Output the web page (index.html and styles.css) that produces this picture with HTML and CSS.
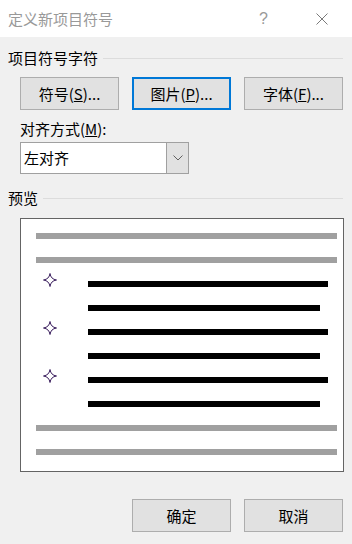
FILE: index.html
```html
<!DOCTYPE html>
<html>
<head>
    <title>定义新项目符号</title>
    <link rel="stylesheet" href="styles.css">
</head>
<body>
    <div class="dialog">
        <div class="titlebar">
            <span class="title">定义新项目符号</span>
            <span class="help">?</span>
            <svg class="close" width="12" height="12" viewBox="0 0 12 12">
                <path d="M0.5 0.5 L11.5 11.5 M11.5 0.5 L0.5 11.5" stroke="#7a7a7a" stroke-width="1" fill="none"/>
            </svg>
        </div>

        <div class="content">
            <div class="group-title">
                <span>项目符号字符</span>
                <div class="rule"></div>
            </div>

            <div class="button-row">
                <button class="btn">符号(<u>S</u>)...</button>
                <button class="btn btn-focus">图片(<u>P</u>)...</button>
                <button class="btn">字体(<u>F</u>)...</button>
            </div>

            <div class="field-label">对齐方式(<u>M</u>):</div>
            <div class="combo">
                <span class="combo-value">左对齐</span>
                <span class="combo-arrow">
                    <svg width="10" height="6" viewBox="0 0 10 6">
                        <path d="M0.5 0.5 L5 5 L9.5 0.5" stroke="#606060" stroke-width="1" fill="none"/>
                    </svg>
                </span>
            </div>

            <div class="group-title preview-title">
                <span>预览</span>
                <div class="rule"></div>
            </div>

            <div class="preview">
                <div class="bar bar-gray"></div>
                <div class="bar bar-gray"></div>

                <div class="item">
                    <svg class="star" width="14" height="14" viewBox="0 0 14 14">
                        <path d="M7 0.5 Q7.8 6.2 13.5 7 Q7.8 7.8 7 13.5 Q6.2 7.8 0.5 7 Q6.2 6.2 7 0.5 Z" fill="#fff" stroke="#3b1f5e" stroke-width="1"/>
                    </svg>
                    <div class="bar bar-long"></div>
                </div>
                <div class="item">
                    <div class="bar bar-short"></div>
                </div>

                <div class="item">
                    <svg class="star" width="14" height="14" viewBox="0 0 14 14">
                        <path d="M7 0.5 Q7.8 6.2 13.5 7 Q7.8 7.8 7 13.5 Q6.2 7.8 0.5 7 Q6.2 6.2 7 0.5 Z" fill="#fff" stroke="#3b1f5e" stroke-width="1"/>
                    </svg>
                    <div class="bar bar-long"></div>
                </div>
                <div class="item">
                    <div class="bar bar-short"></div>
                </div>

                <div class="item">
                    <svg class="star" width="14" height="14" viewBox="0 0 14 14">
                        <path d="M7 0.5 Q7.8 6.2 13.5 7 Q7.8 7.8 7 13.5 Q6.2 7.8 0.5 7 Q6.2 6.2 7 0.5 Z" fill="#fff" stroke="#3b1f5e" stroke-width="1"/>
                    </svg>
                    <div class="bar bar-long"></div>
                </div>
                <div class="item">
                    <div class="bar bar-short"></div>
                </div>

                <div class="bar bar-gray"></div>
                <div class="bar bar-gray"></div>
            </div>

            <div class="footer">
                <button class="btn">确定</button>
                <button class="btn">取消</button>
            </div>
        </div>
    </div>
</body>
</html>
```

FILE: styles.css
```css
body {
    margin: 0;
    font-family: "Noto Sans CJK SC", "Noto Sans", sans-serif;
    font-size: 15px;
    color: #000;
    background: #f0f0f0;
}
.dialog {
    width: 352px;
    height: 544px;
    overflow: hidden;
}
.titlebar {
    height: 37px;
    background: #fff;
    display: flex;
    align-items: center;
    padding-left: 8px;
    box-sizing: border-box;
}
.title {
    color: #999;
    flex: 1;
    line-height: 20px;
}
.help {
    font-family: "Liberation Sans", sans-serif;
    color: #999;
    font-size: 16px;
    margin-right: 48px;
}
.close {
    margin-right: 24px;
}
.content {
    padding: 10px 9px 0 8px;
}
.group-title {
    display: flex;
    align-items: center;
    height: 22px;
    line-height: 22px;
}
.rule {
    flex: 1;
    height: 1px;
    background: #dcdcdc;
    margin-left: 5px;
}
.button-row {
    display: flex;
    gap: 13px;
    margin-top: 8px;
    padding-left: 12px;
}
.btn {
    width: 99px;
    height: 33px;
    background: #e1e1e1;
    border: 1px solid #adadad;
    font-family: inherit;
    font-size: 15px;
    color: #000;
    padding: 0;
    box-sizing: border-box;
}
.btn-focus {
    border: 2px solid #0078d7;
}
.field-label {
    margin-top: 9px;
    padding-left: 12px;
    line-height: 20px;
}
.combo {
    margin: 3px 0 0 12px;
    width: 169px;
    height: 32px;
    box-sizing: border-box;
    border: 1px solid #a0a0a0;
    background: #fff;
    display: flex;
    align-items: stretch;
}
.combo-value {
    flex: 1;
    padding-left: 3px;
    line-height: 30px;
}
.combo-arrow {
    width: 21px;
    background: #e1e1e1;
    border-left: 1px solid #a0a0a0;
    display: flex;
    align-items: center;
    justify-content: center;
}
.preview-title {
    margin-top: 13px;
}
.preview {
    margin: 9px 0 0 12px;
    width: 324px;
    height: 254px;
    box-sizing: border-box;
    border: 1px solid #646464;
    background: #fff;
    padding: 14px 6px 0 15px;
}
.bar {
    height: 6px;
    margin-bottom: 18px;
}
.bar-gray {
    background: #a0a0a0;
}
.item {
    display: flex;
    align-items: flex-start;
    padding-left: 52px;
    position: relative;
}
.bar-long {
    width: 240px;
    background: #000;
}
.bar-short {
    width: 232px;
    background: #000;
}
.star {
    position: absolute;
    left: 7px;
    top: -8px;
}
.footer {
    display: flex;
    justify-content: flex-end;
    gap: 13px;
    margin-top: 27px;
}
```
